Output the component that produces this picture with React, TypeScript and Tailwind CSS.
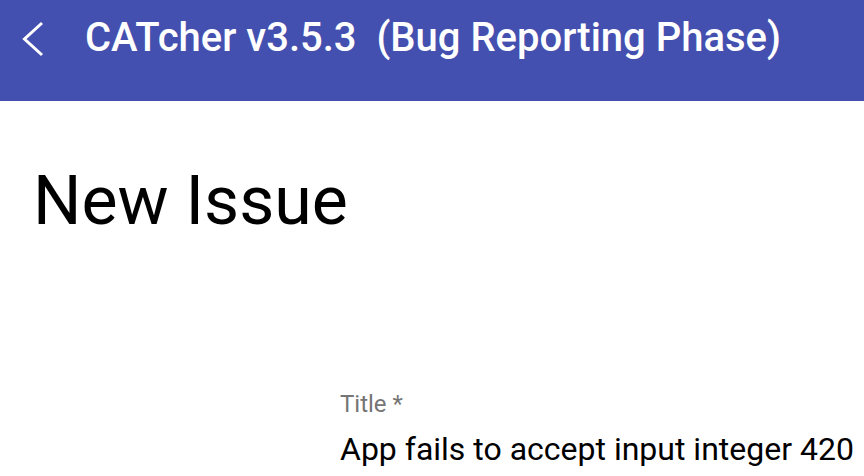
import React from 'react';

export default function App() {
  return (
    <div className="min-h-screen w-full bg-white font-['Roboto','Liberation_Sans',sans-serif] overflow-hidden">
      {/* Toolbar */}
      <header className="h-[101px] w-full bg-[#4450b0] flex items-start pt-[14px] pl-[20px] text-white">
        <button className="mt-[6px] w-[26px] h-[40px] shrink-0">
          <svg width="26" height="40" viewBox="0 0 26 40" fill="none" stroke="white" strokeWidth="3" strokeLinecap="butt" strokeLinejoin="miter">
            <path d="M22 3 L4.5 19 L22 35" />
          </svg>
        </button>
        <h1 className="ml-[39px] text-[40px] leading-[48px] font-medium whitespace-pre">
          CATcher v3.5.3  (Bug Reporting Phase)
        </h1>
      </header>

      <main className="pl-[33px] pt-[60px]">
        <h2 className="text-[68px] leading-[80px] font-normal text-black">New Issue</h2>

        <div className="ml-[307px] mt-[149px] flex flex-col">
          <label className="text-[24px] leading-[28px] text-[#757575]">Title *</label>
          <div className="mt-[15px] text-[32px] leading-[32px] text-black whitespace-nowrap">
            App fails to accept input integer 420
          </div>
        </div>
      </main>
    </div>
  );
}
